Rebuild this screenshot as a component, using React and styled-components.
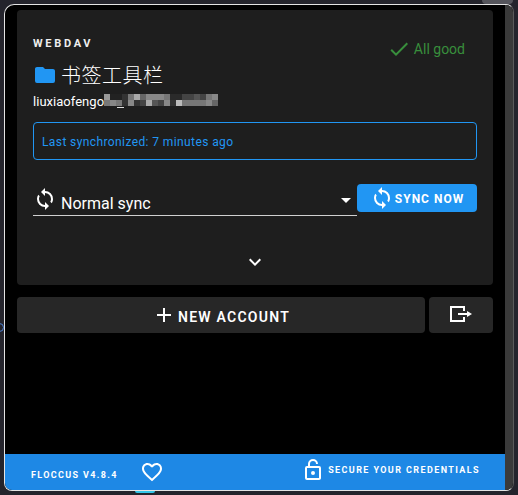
import React from "react";
import styled, { createGlobalStyle } from "styled-components";

const Global = createGlobalStyle`
  html, body { margin: 0; padding: 0; background: #24242c; }
  #root { width: 518px; height: 495px; overflow: hidden; }
`;
const Screen = styled.div`
  width: 518px; height: 495px; box-sizing: border-box; padding: 4px; position: relative;
  background: #24242c; font-family: Roboto, "Noto Sans CJK SC", sans-serif; color: #fff;
`;
const BackTab = styled.div`
  position: absolute; left: 482px; top: 0; width: 31px; height: 4px; background: #55555c; border-radius: 0 0 4px 4px;
`;
const BackRing = styled.div`
  position: absolute; left: -5px; top: 323px; width: 7px; height: 7px; border: 1px solid #4a7fd0; border-radius: 50%;
`;
const BackBar = styled.div`
  position: absolute; left: 135px; top: 491px; width: 20px; height: 2px; background: #35c5e8; border-radius: 0 0 4px 4px;
`;
const Win = styled.div`
  height: 487px; box-sizing: border-box; display: flex; background: #000; overflow: hidden; position: relative;
  border: 1px solid #e4e4e4; border-right-color: #5a5a5a; border-radius: 10px 8px 8px 8px;
`;
const Main = styled.div`
  flex: 1; display: flex; flex-direction: column; min-width: 0;
`;
const Scrollbar = styled.div` width: 8px; background: #3a3a3a; `;
const Content = styled.div`
  flex: 1; padding: 5px 12px 0; display: flex; flex-direction: column; gap: 12px;
`;
const Card = styled.section`
  height: 275px; box-sizing: border-box; background: #1e1e1e; border-radius: 4px;
  padding: 16px 16px 11px; display: flex; flex-direction: column;
`;
const TopRow = styled.div` display: flex; justify-content: space-between; align-items: flex-start; height: 35px; `;
const Overline = styled.div`
  font-size: 11px; font-weight: 700; letter-spacing: 2.7px; line-height: 35px; color: #eee;
`;
const Status = styled.div`
  display: flex; align-items: center; gap: 3px; color: #388e3c; font-size: 14px; margin: 11px 12px 0 0; height: 24px;
`;
const Title = styled.h2`
  margin: 0; font-weight: 300; font-size: 20px; line-height: 28px; display: flex; align-items: center; gap: 4px;
  font-family: "Noto Sans CJK SC", sans-serif; letter-spacing: .5px; color: #fff;
`;
const UserRow = styled.div` display: flex; align-items: center; height: 24px; font-size: 13px; letter-spacing: .03px; `;
const Alert = styled.div`
  margin-top: 9px; height: 38px; box-sizing: border-box; border: 1px solid #2196f3; border-radius: 4px;
  color: #2196f3; font-size: 12px; display: flex; align-items: center; padding: 1px 8px 0; letter-spacing: .4px;
`;
const SyncRow = styled.div` display: flex; align-items: flex-start; margin-top: 24px; `;
const Select = styled.div`
  flex: 1; height: 32px; box-sizing: border-box; border-bottom: 1px solid #d0d0d0; display: flex; align-items: flex-end;
  font-size: 16px; position: relative; gap: 4px; padding-bottom: 2px;
`;
const SelectIcon = styled.span` display: flex; margin-bottom: 2px; `;
const Caret = styled.span`
  position: absolute; right: 6px; top: 14px; width: 0; height: 0;
  border-left: 5px solid transparent; border-right: 5px solid transparent; border-top: 5px solid #fff;
`;
const SyncButton = styled.button`
  width: 120px; height: 28px; border: 0; border-radius: 4px; background: #2196f3; color: #fff; padding: 0;
  display: flex; align-items: center; justify-content: center; gap: 1px; font: 700 12px Roboto, sans-serif; letter-spacing: 1px;
`;
const ButtonLabel = styled.span` position: relative; top: ${p => p.$down}px; `;
const Expand = styled.div` margin-top: auto; display: flex; justify-content: center; `;
const Actions = styled.div` display: flex; gap: 4px; `;
const ActionButton = styled.button`
  height: 36px; border: 0; border-radius: 4px; background: #272727; color: #fff; padding: 0;
  display: flex; align-items: center; justify-content: center; gap: 2px;
  font: 600 14px Roboto, sans-serif; letter-spacing: 1.25px;
  flex: ${p => (p.$grow ? 1 : "none")}; width: ${p => (p.$grow ? "auto" : "64px")};
`;
const Footer = styled.footer`
  height: 36px; background: #1e88e5; display: flex; align-items: center; justify-content: space-between;
  padding: 0 25px 0 26px; font-size: 9px; font-weight: 700; letter-spacing: 1.35px;
`;
const FooterGroup = styled.div` display: flex; align-items: center; `;
const Version = styled.span` margin-right: 22px; position: relative; top: 3px; `;
const Secure = styled(FooterGroup)` gap: 3px; margin-top: -5px; letter-spacing: 1.4px; `;

const Ic = ({ d, size = 24, color = "currentColor", flip }) => (
  <svg width={size} height={size} viewBox="0 0 24 24" fill={color}>
    <path d={d} transform={flip ? "matrix(-1 0 0 1 24 0)" : undefined} />
  </svg>
);
const SYNC = "M12,18A6,6 0 0,1 6,12C6,11 6.25,10.03 6.7,9.2L5.24,7.74C4.46,8.97 4,10.43 4,12A8,8 0 0,0 12,20V23L16,19L12,15M12,4V1L8,5L12,9V6A6,6 0 0,1 18,12C18,13 17.75,13.97 17.3,14.8L18.76,16.26C19.54,15.03 20,13.57 20,12A8,8 0 0,0 12,4Z";
const FOLDER = "M10,4H4C2.89,4 2,4.89 2,6V18A2,2 0 0,0 4,20H20A2,2 0 0,0 22,18V8C22,6.89 21.1,6 20,6H12L10,4Z";
const CHECK = "M21,7L9,19L3.5,13.5L4.91,12.09L9,16.17L19.59,5.59L21,7Z";
const PLUS = "M19,13H13V19H11V13H5V11H11V5H13V11H19V13Z";
const CHEV = "M7.41,8.58L12,13.17L16.59,8.58L18,10L12,16L6,10L7.41,8.58Z";
const HEART = "M12.1,18.55L12,18.65L11.89,18.55C7.14,14.24 4,11.39 4,8.5C4,6.5 5.5,5 7.5,5C9.04,5 10.54,6 11.07,7.36H12.93C13.46,6 14.96,5 16.5,5C18.5,5 20,6.5 20,8.5C20,11.39 16.86,14.24 12.1,18.55M16.5,3C14.76,3 13.09,3.81 12,5.08C10.91,3.81 9.24,3 7.5,3C4.42,3 2,5.41 2,8.5C2,12.27 5.4,15.36 10.55,20.03L12,21.35L13.45,20.03C18.6,15.36 22,12.27 22,8.5C22,5.41 19.58,3 16.5,3Z";
const LOCK_OPEN = "M18,20V10H6V20H18M18,8A2,2 0 0,1 20,10V20A2,2 0 0,1 18,22H6C4.89,22 4,21.1 4,20V10A2,2 0 0,1 6,8H15V6A3,3 0 0,0 12,3A3,3 0 0,0 9,6H7A5,5 0 0,1 12,1A5,5 0 0,1 17,6V8H18M12,17A2,2 0 0,1 10,15A2,2 0 0,1 12,13A2,2 0 0,1 14,15A2,2 0 0,1 12,17Z";

const MOSAIC = [
  ["#999","#222","#222","#333","#777","#aaa","#666","#888","#888","#888","#777","#2a2a2a","#2a2a2a","#444","#444","#555","#444","#777","#888"],
  ["#777","#888","#777","#333","#888","#333","#444","#aaa","#555","#444","#888","#333","#bbb","#777","#777","#777","#777","#888","#666"],
];
const Mosaic = () => (
  <svg width="114" height="14" viewBox="0 0 114 14" shapeRendering="crispEdges">
    {MOSAIC.map((row, y) => row.map((c, x) => <rect key={x + "-" + y} x={x * 6} y={y * 6} width="6" height="6" fill={c} />))}
    <rect x="13" y="13" width="7" height="1" fill="#ddd" />
  </svg>
);
const Logout = () => (
  <svg width="24" height="24" viewBox="0 0 24 24" fill="none" stroke="#fff" strokeWidth="2">
    <path d="M15 8V4H2v14h13v-4" /><path d="M9 11h10" /><path d="M18 8l5 3-5 3z" fill="#fff" stroke="none" />
  </svg>
);

export default function App() {
  return (
    <Screen>
      <Global />
      <BackTab /><BackRing /><BackBar />
      <Win>
        <Main>
          <Content>
            <Card>
              <TopRow>
                <Overline>WEBDAV</Overline>
                <Status><Ic d={CHECK} color="#388e3c" />All good</Status>
              </TopRow>
              <Title><Ic d={FOLDER} color="#2196f3" />书签工具栏</Title>
              <UserRow>liuxiaofengo<Mosaic /></UserRow>
              <Alert>Last synchronized: 7 minutes ago</Alert>
              <SyncRow>
                <Select><SelectIcon><Ic d={SYNC} /></SelectIcon>Normal sync<Caret /></Select>
                <SyncButton><Ic d={SYNC} /><ButtonLabel $down={1}>SYNC NOW</ButtonLabel></SyncButton>
              </SyncRow>
              <Expand><Ic d={CHEV} /></Expand>
            </Card>
            <Actions>
              <ActionButton $grow><Ic d={PLUS} /><ButtonLabel $down={2}>NEW ACCOUNT</ButtonLabel></ActionButton>
              <ActionButton><Logout /></ActionButton>
            </Actions>
          </Content>
          <Footer>
            <FooterGroup><Version>FLOCCUS V4.8.4</Version><Ic d={HEART} /></FooterGroup>
            <Secure><Ic d={LOCK_OPEN} flip />SECURE YOUR CREDENTIALS</Secure>
          </Footer>
        </Main>
        <Scrollbar />
      </Win>
    </Screen>
  );
}
